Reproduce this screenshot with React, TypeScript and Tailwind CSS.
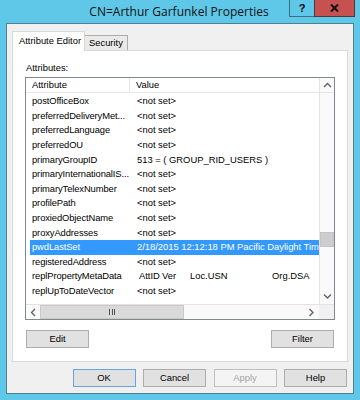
import React from 'react';

const ui = { fontFamily: '"Liberation Sans", Arial, sans-serif' };

interface RowProps {
  name: string;
  value?: React.ReactNode;
  selected?: boolean;
}

const Row: React.FC<RowProps> = ({ name, value = '<not set>', selected = false }) => (
  <div
    className={`ml-[4px] flex h-[14.6px] items-center whitespace-nowrap ${
      selected ? 'bg-[#3399ff] text-white' : 'text-black'
    }`}
  >
    <div className="w-[100px] shrink-0 pl-[2px] tracking-[-0.1px]">{name}</div>
    <div className="pl-[7px]">{value}</div>
  </div>
);

const Btn: React.FC<{ label: string; def?: boolean; disabled?: boolean }> = ({
  label,
  def = false,
  disabled = false,
}) => (
  <div
    className={`flex h-[18px] w-[63px] items-center justify-center border ${
      disabled
        ? 'border-[#bfbfbf] bg-[#f4f4f4] text-[#a3a3a3]'
        : def
          ? 'border-[#6aa5d9] bg-[#e1e1e1] text-black'
          : 'border-[#adadad] bg-[#e1e1e1] text-black'
    }`}
  >
    {label}
  </div>
);

const Chevron: React.FC<{ dir: 'up' | 'down' | 'left' | 'right' }> = ({ dir }) => {
  const pts = {
    up: '1,5 4.5,1.5 8,5',
    down: '1,1.5 4.5,5 8,1.5',
    left: '5,1 1.5,4.5 5,8',
    right: '1.5,1 5,4.5 1.5,8',
  }[dir];
  const box = dir === 'up' || dir === 'down' ? '0 0 9 7' : '0 0 7 9';
  const [w, h] = dir === 'up' || dir === 'down' ? [9, 7] : [7, 9];
  return (
    <svg width={w} height={h} viewBox={box}>
      <polyline points={pts} fill="none" stroke="#606060" strokeWidth="1.3" />
    </svg>
  );
};

export default function App() {
  return (
    <div className="flex h-[400px] w-[360px] flex-col bg-[#5fc8e8] text-[9.4px]" style={ui}>
      {/* title bar */}
      <div className="relative flex h-[23px] shrink-0 items-center justify-center">
        <span
          className="ml-[-2px] text-[12px] text-[#111]"
          style={{ fontFamily: '"Open Sans", "Noto Sans", sans-serif' }}
        >
          CN=Arthur Garfunkel Properties
        </span>
        <div className="absolute right-[5px] top-0 flex">
          <div className="flex h-[17px] w-[25px] items-center justify-center border-b border-l border-[#3c6f80] text-[11px] font-bold text-black">
            ?
          </div>
          <div className="flex h-[17px] w-[41px] items-center justify-center border-b border-l border-r border-[#4a3a3a] bg-[#c75050]">
            <svg width="9" height="8" viewBox="0 0 9 8">
              <path d="M1 0.5 L8 7.5 M8 0.5 L1 7.5" stroke="#111" strokeWidth="2" />
            </svg>
          </div>
        </div>
      </div>

      {/* client area */}
      <div className="ml-[6px] flex h-[371px] w-[348px] flex-col border border-[#4f7f90] bg-[#f0f0f0] px-[5px] pt-[7px]">
        {/* tabs */}
        <div className="relative z-10 flex h-[19px] items-end">
          <div className="mb-[-1px] flex h-[20px] w-[73px] items-center border-l border-r border-t border-[#d9d9d9] bg-white pl-[6px] pb-[1px]">
            Attribute Editor
          </div>
          <div className="flex h-[15px] w-[43px] items-center border-r border-t border-[#acacac] bg-[#eaeaea] pl-[4px]">
            Security
          </div>
        </div>

        {/* panel */}
        <div className="flex h-[312px] w-[336px] flex-col border border-[#d9d9d9] bg-white">
          <div className="ml-[13px] mt-[11px] h-[12px] leading-[12px]">Attributes:</div>

          {/* list view */}
          <div className="ml-[12px] mt-[3px] flex h-[243px] w-[310px] flex-col border border-[#828790]">
            <div className="flex h-[226px]">
              <div className="flex w-[293px] flex-col overflow-hidden">
                <div className="flex h-[15px] shrink-0 items-center border-b border-[#e5e5e5]">
                  <div className="h-full w-[104px] border-r border-[#e5e5e5] pl-[6px] leading-[14px]">
                    Attribute
                  </div>
                  <div className="pl-[6px]">Value</div>
                </div>
                <div className="pt-[1px]">
                  <Row name="postOfficeBox" />
                  <Row name="preferredDeliveryMet..." />
                  <Row name="preferredLanguage" />
                  <Row name="preferredOU" />
                  <Row name="primaryGroupID" value="513 = ( GROUP_RID_USERS )" />
                  <Row name="primaryInternationalIS..." />
                  <Row name="primaryTelexNumber" />
                  <Row name="profilePath" />
                  <Row name="proxiedObjectName" />
                  <Row name="proxyAddresses" />
                  <Row
                    name="pwdLastSet"
                    selected
                    value="2/18/2015 12:12:18 PM Pacific Daylight Time"
                  />
                  <Row name="registeredAddress" />
                  <Row
                    name="replPropertyMetaData"
                    value={
                      <span className="flex pl-[2px]">
                        <span className="w-[23px]">AttID</span>
                        <span className="w-[28px]">Ver</span>
                        <span className="w-[82px]">Loc.USN</span>
                        <span>Org.DSA</span>
                      </span>
                    }
                  />
                  <Row name="replUpToDateVector" />
                </div>
              </div>

              {/* vertical scrollbar */}
              <div className="flex w-[15px] flex-col border-l border-[#e3e3e3] bg-[#fafafa]">
                <div className="flex h-[15px] items-center justify-center border-b border-[#e5e5e5]">
                  <Chevron dir="up" />
                </div>
                <div className="h-[139px]" />
                <div className="h-[15px] border border-[#c4c4c4] bg-[#cdcdcd]" />
                <div className="flex-1" />
                <div className="flex h-[15px] items-center justify-center">
                  <Chevron dir="down" />
                </div>
              </div>
            </div>

            {/* horizontal scrollbar */}
            <div className="flex h-[15px] border-t border-[#e3e3e3]">
              <div className="flex w-[293px] items-center bg-[#fafafa]">
                <div className="flex w-[14px] justify-center">
                  <Chevron dir="left" />
                </div>
                <div className="flex h-full w-[144px] items-center justify-center gap-[1.5px] border border-[#c9c9c9] bg-[#dadada]">
                  <div className="h-[6px] w-[1px] bg-[#555]" />
                  <div className="h-[6px] w-[1px] bg-[#555]" />
                  <div className="h-[6px] w-[1px] bg-[#555]" />
                </div>
                <div className="flex-1" />
                <div className="flex w-[15px] justify-center">
                  <Chevron dir="right" />
                </div>
              </div>
              <div className="w-[15px] bg-[#f0f0f0]" />
            </div>
          </div>

          <div className="mt-[10px] flex justify-between px-[13px]">
            <Btn label="Edit" />
            <Btn label="Filter" />
          </div>
        </div>

        {/* dialog buttons */}
        <div className="mt-[7px] flex justify-end gap-[7.5px] pr-[1px]">
          <Btn label="OK" def />
          <Btn label="Cancel" />
          <Btn label="Apply" disabled />
          <Btn label="Help" />
        </div>
      </div>
    </div>
  );
}
